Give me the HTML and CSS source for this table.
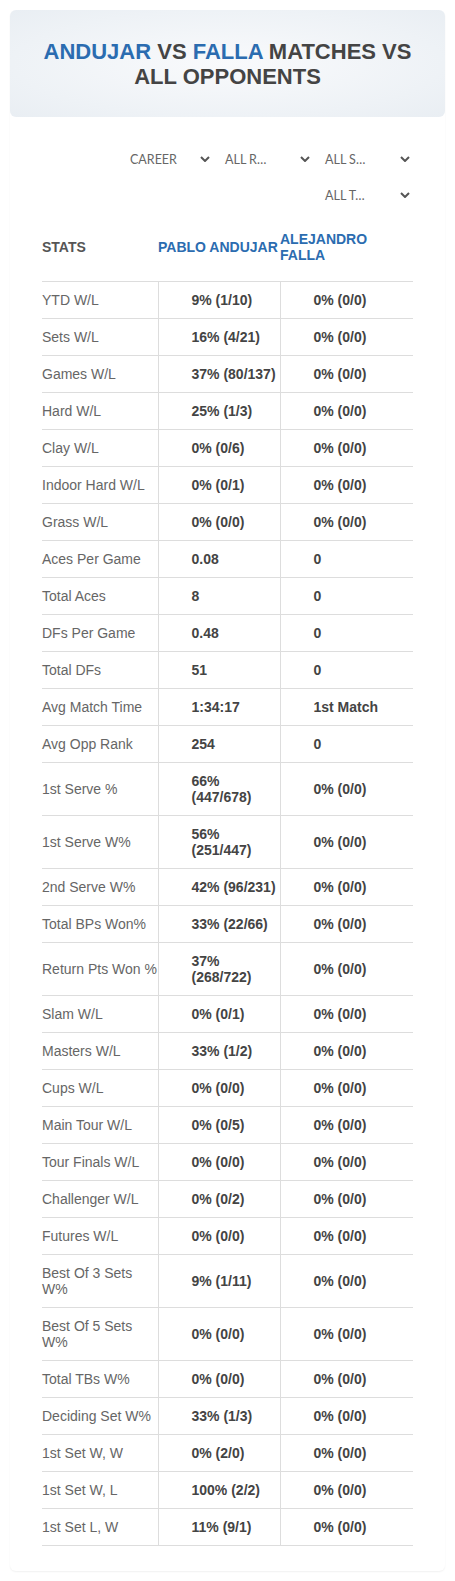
FILE: index.html
```html
<!DOCTYPE html>
<html lang="en">
<head>
    <meta charset="UTF-8">
    <meta name="viewport" content="width=device-width, initial-scale=1.0">
    <title>Andujar vs Falla - Matches vs All Opponents</title>
    <link rel="stylesheet" href="styles.css">
</head>
<body>
    <div class="card">
        <header class="card-header">
            <h1><span class="blue">ANDUJAR</span> VS <span class="blue">FALLA</span> MATCHES VS ALL OPPONENTS</h1>
        </header>

        <div class="card-body">
            <div class="filters">
                <div class="filter filter-first">
                    <span>CAREER</span>
                    <svg viewBox="0 0 10 6" width="10" height="6"><path d="M1 1l4 4 4-4" fill="none" stroke="#555" stroke-width="2"/></svg>
                </div>
                <div class="filter">
                    <span>ALL R…</span>
                    <svg viewBox="0 0 10 6" width="10" height="6"><path d="M1 1l4 4 4-4" fill="none" stroke="#555" stroke-width="2"/></svg>
                </div>
                <div class="filter">
                    <span>ALL S…</span>
                    <svg viewBox="0 0 10 6" width="10" height="6"><path d="M1 1l4 4 4-4" fill="none" stroke="#555" stroke-width="2"/></svg>
                </div>
                <div class="filter">
                    <span>ALL T…</span>
                    <svg viewBox="0 0 10 6" width="10" height="6"><path d="M1 1l4 4 4-4" fill="none" stroke="#555" stroke-width="2"/></svg>
                </div>
            </div>

            <table class="stats-table">
                <colgroup>
                    <col class="col-label">
                    <col class="col-p1">
                    <col class="col-p2">
                </colgroup>
                <thead>
                    <tr>
                        <th class="th-stats">STATS</th>
                        <th class="th-player">PABLO ANDUJAR</th>
                        <th class="th-player">ALEJANDRO FALLA</th>
                    </tr>
                </thead>
                <tbody>
                    <tr><td>YTD W/L</td><td>9% (1/10)</td><td>0% (0/0)</td></tr>
                    <tr><td>Sets W/L</td><td>16% (4/21)</td><td>0% (0/0)</td></tr>
                    <tr><td>Games W/L</td><td>37% (80/137)</td><td>0% (0/0)</td></tr>
                    <tr><td>Hard W/L</td><td>25% (1/3)</td><td>0% (0/0)</td></tr>
                    <tr><td>Clay W/L</td><td>0% (0/6)</td><td>0% (0/0)</td></tr>
                    <tr><td>Indoor Hard W/L</td><td>0% (0/1)</td><td>0% (0/0)</td></tr>
                    <tr><td>Grass W/L</td><td>0% (0/0)</td><td>0% (0/0)</td></tr>
                    <tr><td>Aces Per Game</td><td>0.08</td><td>0</td></tr>
                    <tr><td>Total Aces</td><td>8</td><td>0</td></tr>
                    <tr><td>DFs Per Game</td><td>0.48</td><td>0</td></tr>
                    <tr><td>Total DFs</td><td>51</td><td>0</td></tr>
                    <tr><td>Avg Match Time</td><td>1:34:17</td><td>1st Match</td></tr>
                    <tr><td>Avg Opp Rank</td><td>254</td><td>0</td></tr>
                    <tr><td>1st Serve %</td><td>66% (447/678)</td><td>0% (0/0)</td></tr>
                    <tr><td>1st Serve W%</td><td>56% (251/447)</td><td>0% (0/0)</td></tr>
                    <tr><td>2nd Serve W%</td><td>42% (96/231)</td><td>0% (0/0)</td></tr>
                    <tr><td>Total BPs Won%</td><td>33% (22/66)</td><td>0% (0/0)</td></tr>
                    <tr><td>Return Pts Won %</td><td>37% (268/722)</td><td>0% (0/0)</td></tr>
                    <tr><td>Slam W/L</td><td>0% (0/1)</td><td>0% (0/0)</td></tr>
                    <tr><td>Masters W/L</td><td>33% (1/2)</td><td>0% (0/0)</td></tr>
                    <tr><td>Cups W/L</td><td>0% (0/0)</td><td>0% (0/0)</td></tr>
                    <tr><td>Main Tour W/L</td><td>0% (0/5)</td><td>0% (0/0)</td></tr>
                    <tr><td>Tour Finals W/L</td><td>0% (0/0)</td><td>0% (0/0)</td></tr>
                    <tr><td>Challenger W/L</td><td>0% (0/2)</td><td>0% (0/0)</td></tr>
                    <tr><td>Futures W/L</td><td>0% (0/0)</td><td>0% (0/0)</td></tr>
                    <tr><td>Best Of 3 Sets W%</td><td>9% (1/11)</td><td>0% (0/0)</td></tr>
                    <tr><td>Best Of 5 Sets W%</td><td>0% (0/0)</td><td>0% (0/0)</td></tr>
                    <tr><td>Total TBs W%</td><td>0% (0/0)</td><td>0% (0/0)</td></tr>
                    <tr><td>Deciding Set W%</td><td>33% (1/3)</td><td>0% (0/0)</td></tr>
                    <tr><td>1st Set W, W</td><td>0% (2/0)</td><td>0% (0/0)</td></tr>
                    <tr><td>1st Set W, L</td><td>100% (2/2)</td><td>0% (0/0)</td></tr>
                    <tr><td>1st Set L, W</td><td>11% (9/1)</td><td>0% (0/0)</td></tr>
                </tbody>
            </table>
        </div>
    </div>
</body>
</html>
```

FILE: styles.css
```css
/* Reset básico */
* {
    margin: 0;
    padding: 0;
    box-sizing: border-box;
}

body {
    font-family: 'Liberation Sans', Arial, sans-serif;
    background: #fff;
    color: #555;
    padding: 10px;
}

.card {
    width: 435px;
    border-radius: 6px;
    box-shadow: 0 1px 2px rgba(0, 0, 0, 0.06);
}

.card-header {
    height: 107px;
    display: flex;
    align-items: center;
    justify-content: center;
    border-radius: 6px;
    background: radial-gradient(ellipse at center, #f9fafc 0%, #eef2f6 70%, #e9eef3 100%);
}

.card-header h1 {
    font-size: 22px;
    line-height: 25px;
    font-weight: bold;
    color: #444;
    text-align: center;
    padding: 0 20px;
}

.blue {
    color: #2b6cb0;
}

.card-body {
    padding: 24px 32px 25px;
}

/* Filtros */
.filters {
    display: flex;
    flex-wrap: wrap;
    justify-content: flex-end;
}

.filter {
    width: 100px;
    height: 36px;
    display: flex;
    align-items: center;
    justify-content: space-between;
    padding: 0 3px 0 12px;
    font-family: Lato, 'Open Sans', sans-serif;
    font-size: 12.5px;
    color: #666;
}

.filter-first {
    width: 95px;
}

/* Tabela */
.stats-table {
    width: 371px;
    border-collapse: collapse;
    table-layout: fixed;
    font-size: 14px;
    line-height: 16px;
}

.col-label {
    width: 116px;
}

.col-p1 {
    width: 122px;
}

.col-p2 {
    width: 133px;
}

.stats-table th {
    text-align: left;
    font-weight: bold;
    padding: 18px 0 18px;
    border-bottom: 1px solid #ddd;
    vertical-align: middle;
}

.th-stats {
    color: #555;
}

.th-player {
    color: #2b6cb0;
}

.stats-table td {
    padding: 10px 0;
    border-bottom: 1px solid #ddd;
    vertical-align: middle;
    font-weight: bold;
    color: #444;
}

.stats-table td:first-child {
    font-weight: normal;
    color: #666;
    border-right: 1px solid #ddd;
}

.stats-table td:nth-child(2) {
    padding-left: 33px;
    border-right: 1px solid #ddd;
}

.stats-table td:nth-child(3) {
    padding-left: 33px;
}
```
